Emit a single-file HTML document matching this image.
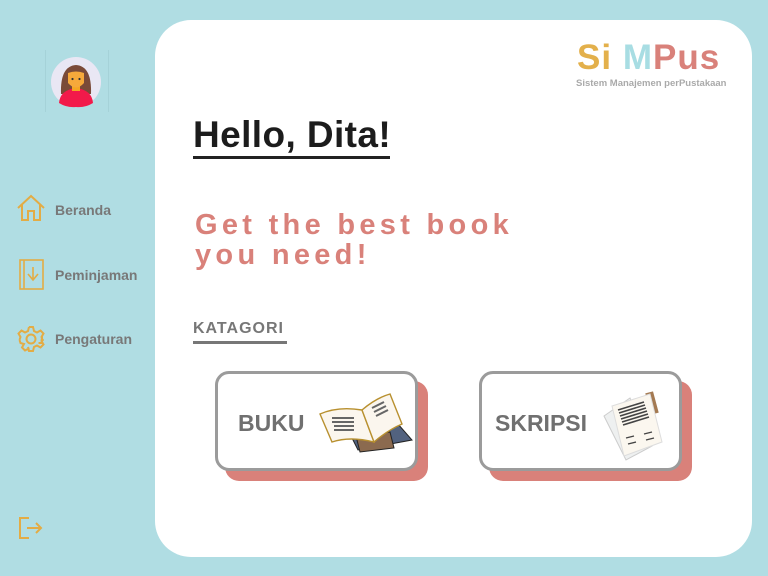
<!DOCTYPE html>
<html><head><style>
*{margin:0;padding:0;box-sizing:border-box}
body{width:768px;height:576px;background:#b0dde3;font-family:"Liberation Sans",sans-serif;position:relative;overflow:hidden}
.abs{position:absolute}
.panel{left:155px;top:20px;width:597px;height:537px;background:#fff;border-radius:36px}
.nav{font-weight:bold;color:#787878;font-size:14px}
.card{width:203px;height:100px;border:3px solid #9b9b9b;border-radius:14px;background:#fff;box-shadow:10px 10px 0 #d9817a}
.card span{position:absolute;left:20px;top:36px;font-size:23px;font-weight:bold;color:#707070}
</style></head><body>
<div class="abs" style="left:45px;top:50px;width:64px;height:62px;border-left:1px solid #a5d2d8;border-right:1px solid #a5d2d8"></div>
<svg class="abs" style="left:50px;top:56px" width="52" height="52" viewBox="0 0 52 52">
<circle cx="26" cy="26" r="25" fill="#e9e7f4"/>
<path d="M11 38 Q10 10 26 9 Q42 10 41 38Z" fill="#7a4a38"/>
<path d="M9 47 Q10 34 26 32 Q42 34 43 47 Q35 52 26 51 Q17 52 9 47Z" fill="#f21a4a"/>
<rect x="22" y="27" width="8" height="8" fill="#f5a623"/>
<path d="M18 17 Q26 14 34 17 L34 27 Q26 36 18 27Z" fill="#f6a93b"/>
<circle cx="22.5" cy="23" r="1.1" fill="#333"/><circle cx="29.5" cy="23" r="1.1" fill="#333"/>
</svg>
<svg class="abs" style="left:16px;top:194px" width="30" height="28" viewBox="0 0 30 28" fill="none" stroke="#e3ac45" stroke-width="2"><path d="M2 14 L15 2 L28 14 M6 11 V26 H12 V17 H18 V26 H24 V11"/></svg>
<div class="abs nav" style="left:55px;top:202px">Beranda</div>
<svg class="abs" style="left:19px;top:259px" width="26" height="32" viewBox="0 0 26 32" fill="none" stroke="#e3ac45" stroke-width="1.6"><rect x="1" y="1" width="23" height="29"/><path d="M5 1 V30 M14 8 V20 M9 15 L14 21 L19 15"/></svg>
<div class="abs nav" style="left:55px;top:267px">Peminjaman</div>
<svg class="abs" style="left:17px;top:325px" width="28" height="28" viewBox="0 0 28 28" fill="none" stroke="#e3ac45" stroke-width="2"><path d="M12 2h4l1 4 3 1.5 3.5-2 3 3-2 3.5L25.5 15l-.5 0 0 0 .5 0-1 3-3 0 .5 0M12 2 11 6 8 7.5 4.5 5.5l-3 3 2 3.5L2.5 15l-.5 0 .5 0 1 3 3.5 1-2 3.5 3 3 3.5-2L11 22l1 4h4l1-4 3-1.5 3.5 2 3-3-2-3.5L25 12l1-0"/><circle cx="14" cy="14" r="4.5"/></svg>
<div class="abs nav" style="left:55px;top:331px">Pengaturan</div>
<svg class="abs" style="left:18px;top:516px" width="26" height="24" viewBox="0 0 26 24" fill="none" stroke="#e3ac45" stroke-width="2"><path d="M11 2H2V22H11M9 12H23M18 7L23 12L18 17"/></svg>

<div class="abs panel"></div>
<div class="abs" style="left:577px;top:38px;font-size:35px;font-weight:bold;letter-spacing:1px"><span style="color:#e3b04b">Si</span> <span style="color:#a8dde3">M</span><span style="color:#d9817a">Pus</span></div>
<div class="abs" style="left:576px;top:78px;font-size:9.5px;font-weight:bold;color:#aaa">Sistem Manajemen perPustakaan</div>
<div class="abs" style="left:193px;top:114px;font-size:37px;font-weight:bold;color:#1c1c1c;letter-spacing:0.4px">Hello, Dita!</div>
<div class="abs" style="left:193px;top:156px;width:197px;height:3px;background:#222"></div>
<div class="abs" style="left:195px;top:210px;font-size:29px;font-weight:bold;color:#d9817a;letter-spacing:4.3px;line-height:30px">Get the best book<br>you need!</div>
<div class="abs" style="left:193px;top:320px;font-size:16px;font-weight:bold;color:#777;letter-spacing:1px">KATAGORI</div>
<div class="abs" style="left:193px;top:341px;width:94px;height:3px;background:#777"></div>

<div class="abs card" style="left:215px;top:371px"><span>BUKU</span>
<svg class="abs" style="left:100px;top:16px" width="96" height="64" viewBox="0 0 96 64">
<path d="M30 40 L80 34 L94 50 L40 60Z" fill="#52627f" stroke="#222"/>
<path d="M38 46 L72 42 L76 58 L42 62Z" fill="#8b6a4f" stroke="#222"/>
<path d="M2 24 Q20 16 44 20 L56 52 Q32 46 14 52Z" fill="#fbf6ee" stroke="#b8902f" stroke-width="1.4"/>
<path d="M44 20 Q58 8 72 4 L84 34 Q70 40 56 52Z" fill="#fbf6ee" stroke="#b8902f" stroke-width="1.4"/>
<path d="M14 28h22M14 32h22M16 36h20M16 40h20M54 18l12-6M56 22l12-6M58 26l12-6" stroke="#666" stroke-width="2"/>
</svg></div>
<div class="abs card" style="left:479px;top:371px"><span style="left:13px">SKRIPSI</span>
<svg class="abs" style="left:118px;top:12px" width="70" height="76" viewBox="0 0 70 76">
<path d="M4 30 L30 12 L52 60 L26 74Z" fill="#eef0f0" stroke="#ccc"/>
<rect x="48" y="6" width="8" height="22" fill="#a47a52" transform="rotate(-15 52 17)"/>
<path d="M12 20 L50 8 L62 56 L24 70Z" fill="#fbf7ef" stroke="#ddd"/>
<path d="M18 24l26-8M19 27l26-8M20 30l26-8M21 33l26-8M22 36l26-8M23 39l26-8" stroke="#444" stroke-width="1.6"/>
<path d="M26 52l8-2M28 58l8-2M44 48l8-2M46 54l8-2" stroke="#444" stroke-width="1.4"/>
</svg></div>
</body></html>
